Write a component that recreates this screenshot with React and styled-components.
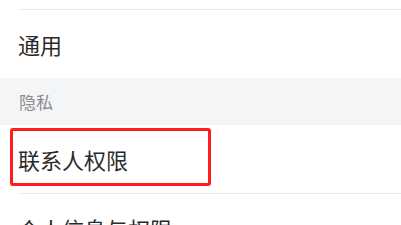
import styled, { createGlobalStyle } from 'styled-components'

const Global = createGlobalStyle`
  html, body {
    margin: 0;
    padding: 0;
    background: #ffffff;
  }
  body {
    font-family: "Noto Sans CJK SC", "Noto Sans", sans-serif;
    -webkit-font-smoothing: antialiased;
  }
`

const List = styled.div`
  display: flex;
  flex-direction: column;
  width: 401px;
  background: #ffffff;
`

const Row = styled.div`
  position: relative;
  display: flex;
  padding-left: 18px;
`

const RowInner = styled.div`
  flex: 1;
  display: flex;
  align-items: center;
  height: ${(p) => p.$height || 68}px;
  border-bottom: ${(p) => (p.$divider ? '1px solid #ececee' : 'none')};
  font-size: 22px;
  line-height: 1;
  color: #2b2b2b;
`

const SectionHeader = styled.div`
  display: flex;
  align-items: center;
  height: 47px;
  padding-left: 19px;
  background: #f4f5f7;
  font-size: 17px;
  line-height: 1;
  color: #8c8c8c;
`

const Highlight = styled.div`
  position: absolute;
  left: 10px;
  top: 3px;
  width: 201px;
  height: 58px;
  box-sizing: border-box;
  border: 3px solid #fe1c1c;
  border-radius: 3px;
  pointer-events: none;
`

export default function App() {
  return (
    <>
      <Global />
      <List>
        <Row>
          <RowInner $height={9} $divider />
        </Row>
        <Row>
          <RowInner>通用</RowInner>
        </Row>
        <SectionHeader>隐私</SectionHeader>
        <Row>
          <RowInner $divider>联系人权限</RowInner>
          <Highlight />
        </Row>
        <Row>
          <RowInner $divider>个人信息与权限</RowInner>
        </Row>
      </List>
    </>
  )
}
